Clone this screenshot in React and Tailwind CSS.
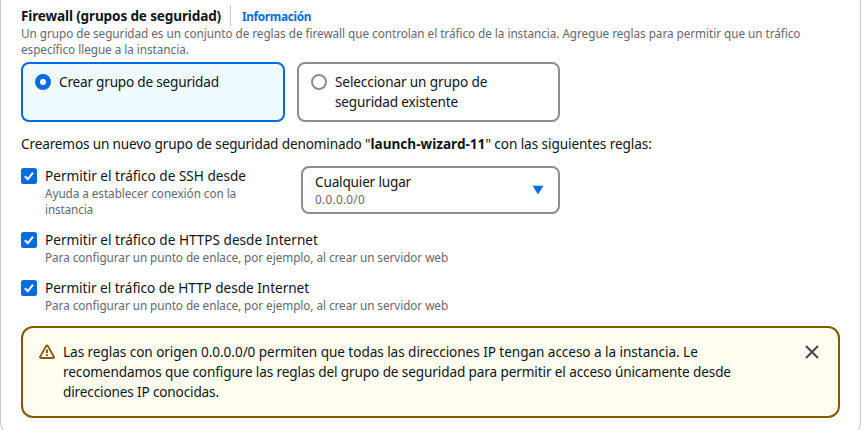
function CheckIcon() {
  return (
    <svg viewBox="0 0 16 16" className="h-4 w-4 shrink-0" fill="none">
      <rect width="16" height="16" rx="2.5" fill="#006ce0" />
      <path d="M3.8 8.2 6.8 11.2 12 4.6" stroke="#fff" strokeWidth="2" />
    </svg>
  );
}

function CheckRow({ label, children }) {
  return (
    <div className="flex gap-2">
      <div className="pt-[2px]">
        <CheckIcon />
      </div>
      <div>
        <div className="text-[13.6px] leading-5">{label}</div>
        <div className="-mt-px pb-px text-[11.75px] leading-4 text-[#656871]">{children}</div>
      </div>
    </div>
  );
}

function WarningIcon() {
  return (
    <svg viewBox="0 0 16 16" className="h-4 w-4 shrink-0" fill="none" stroke="#855900" strokeWidth="1.9">
      <path d="M7.1 2.1 1.2 12.6Q.6 14 2 14h12q1.4 0 .8-1.4L8.9 2.1Q8 .9 7.1 2.1Z" strokeLinejoin="round" />
      <path d="M8 5.4v3.6M8 10.2v1.8" />
    </svg>
  );
}

function CloseIcon() {
  return (
    <svg viewBox="0 0 16 16" className="h-4 w-4 shrink-0" fill="none" stroke="#424650" strokeWidth="2">
      <path d="m2 2 12 12M14 2 2 14" />
    </svg>
  );
}

export default function App() {
  return (
    <div className="h-[430px] w-[864px] overflow-hidden bg-white font-['Noto_Sans',sans-serif] whitespace-nowrap text-[#0f141a]">
      <div className="h-[438px] w-[861px] rounded-b-2xl border-x border-b border-[#c6c6cd] pt-[6px] pr-5 pl-5">
        <div className="flex h-5 items-center">
          <h2 className="w-[209px] text-[13.6px] leading-5 font-bold tracking-[-0.16px]">Firewall (grupos de seguridad)</h2>
          <div className="h-5 border-l border-[#c6c6cd] pl-[11px] text-[11.75px] leading-5 font-bold tracking-[-0.31px] text-[#006ce0]">
            Información
          </div>
        </div>
        <p className="-mt-px pb-px text-[11.75px] leading-4 tracking-[-0.045px] text-[#656871]">
          Un grupo de seguridad es un conjunto de reglas de firewall que controlan el tráfico de la instancia. Agregue reglas para permitir que un tráfico
          <br />
          específico llegue a la instancia.
        </p>

        <div className="mt-1 flex gap-3">
          <div className="flex h-[60px] w-[264px] gap-2 rounded-lg border-2 border-[#006ce0] bg-[#f0fbff] px-3 py-2 text-[13.6px] leading-5">
            <span className="mt-[2px] h-4 w-4 shrink-0 rounded-full border-5 border-[#006ce0] bg-white" />
            <span className="tracking-[-0.21px]">Crear grupo de seguridad</span>
          </div>
          <div className="flex h-[60px] w-[263px] gap-2 rounded-lg border-2 border-[#8c8c94] bg-white px-3 py-2 text-[13.6px] leading-5">
            <span className="mt-[2px] h-4 w-4 shrink-0 rounded-full border-2 border-[#8c8c94] bg-white" />
            <span>
              <span className="tracking-[-0.12px]">Seleccionar un grupo de</span>
              <br />
              <span className="tracking-[-0.16px]">seguridad existente</span>
            </span>
          </div>
        </div>

        <p className="mt-3 text-[13.6px] leading-5">
          <span className="tracking-[-0.15px]">Crearemos un nuevo grupo de seguridad denominado "</span>
          <b>launch-wizard-11</b>
          <span className="tracking-[-0.08px]">" con las siguientes reglas:</span>
        </p>

        <div className="mt-3 flex h-16">
          <div className="w-[280px]">
            <CheckRow label="Permitir el tráfico de SSH desde">
              <span className="tracking-[-0.06px]">Ayuda a establecer conexión con la</span>
              <br />
              <span className="tracking-[-0.14px]">instancia</span>
            </CheckRow>
          </div>
          <div className="flex h-12 w-[259px] items-center justify-between rounded-lg border-2 border-[#8c8c94] pr-[14px] pl-3">
            <div>
              <div className="text-[13.6px] leading-[18px] tracking-[-0.18px]">Cualquier lugar</div>
              <div className="text-[11.75px] leading-4 tracking-[0.29px] text-[#656871]">0.0.0.0/0</div>
            </div>
            <svg viewBox="0 0 12 10" className="h-[10px] w-3" fill="#006ce0">
              <path d="M1 1h10L6 9Z" stroke="#006ce0" strokeLinejoin="round" strokeWidth="0.5" />
            </svg>
          </div>
        </div>

        <div className="flex flex-col gap-3">
          <CheckRow label="Permitir el tráfico de HTTPS desde Internet">
            <span className="tracking-[-0.06px]">Para configurar un punto de enlace, por ejemplo, al crear un servidor web</span>
          </CheckRow>
          <CheckRow label={<span className="tracking-[-0.03px]">Permitir el tráfico de HTTP desde Internet</span>}>
            <span className="tracking-[-0.06px]">Para configurar un punto de enlace, por ejemplo, al crear un servidor web</span>
          </CheckRow>
        </div>

        <div className="mt-3 flex h-[92px] w-[819px] gap-2 rounded-xl border-2 border-[#855900] bg-[#fffef0] px-4 py-[14px]">
          <div className="pt-[2px]">
            <WarningIcon />
          </div>
          <p className="grow text-[13.6px] leading-5">
            <span className="tracking-[-0.06px]">Las reglas con origen 0.0.0.0/0 permiten que todas las direcciones IP tengan acceso a la instancia. Le</span>
            <br />
            <span className="tracking-[-0.12px]">recomendamos que configure las reglas del grupo de seguridad para permitir el acceso únicamente desde</span>
            <br />
            <span className="tracking-[-0.15px]">direcciones IP conocidas.</span>
          </p>
          <div className="pt-[2px] pr-[2px]">
            <CloseIcon />
          </div>
        </div>
      </div>
    </div>
  );
}
